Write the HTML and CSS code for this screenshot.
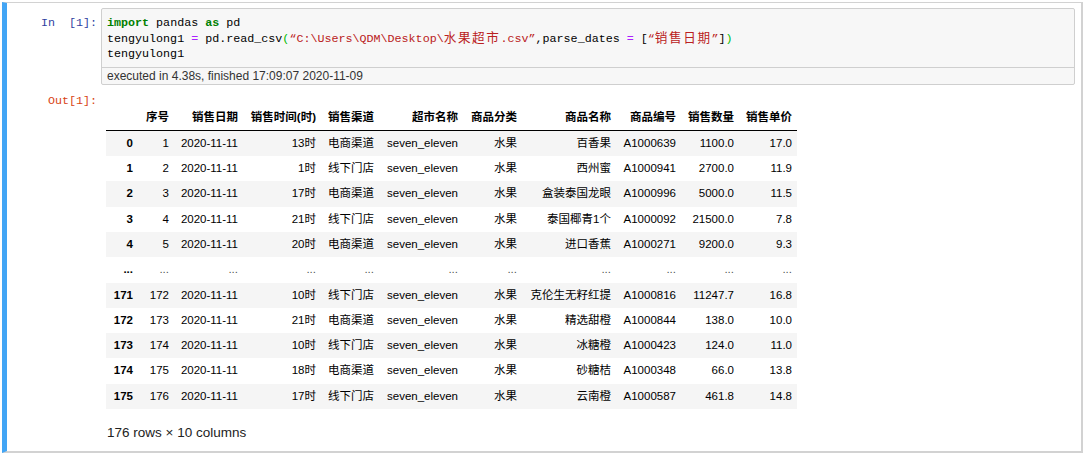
FILE: index.html
```html
<!DOCTYPE html>
<html lang="zh">
<head>
<meta charset="utf-8">
<title>Notebook</title>
<link rel="stylesheet" href="styles.css">
</head>
<body>
<div class="cell">
  <div class="input">
    <div class="prompt in-prompt">In  [1]:</div>
    <div class="code-box">
      <div class="code">
        <div class="line"><span class="kw">import</span> pandas <span class="kw">as</span> pd</div>
        <div class="line">tengyulong1 <span class="op">=</span> pd.read_csv<span class="br">(</span><span class="str">“C:\Users\QDM\Desktop\<span class="cjk">水果超市</span>.csv”</span>,parse_dates <span class="op">=</span> [<span class="str">“<span class="cjk">销售日期</span>”</span>]<span class="br">)</span></div>
        <div class="line">tengyulong1</div>
      </div>
      <div class="exec">executed in 4.38s, finished 17:09:07 2020-11-09</div>
    </div>
  </div>
  <div class="output">
    <div class="prompt out-prompt">Out[1]:</div>
    <div class="out-content">
      <table class="df">
        <colgroup>
          <col class="c0"><col class="c1"><col class="c2"><col class="c3"><col class="c4"><col class="c5"><col class="c6"><col class="c7"><col class="c8"><col class="c9"><col class="c10">
        </colgroup>
        <thead>
          <tr><th></th><th>序号</th><th>销售日期</th><th>销售时间(时)</th><th>销售渠道</th><th>超市名称</th><th>商品分类</th><th>商品名称</th><th>商品编号</th><th>销售数量</th><th>销售单价</th></tr>
        </thead>
        <tbody>
          <tr><th>0</th><td>1</td><td>2020-11-11</td><td>13时</td><td>电商渠道</td><td>seven_eleven</td><td>水果</td><td>百香果</td><td>A1000639</td><td>1100.0</td><td>17.0</td></tr>
          <tr><th>1</th><td>2</td><td>2020-11-11</td><td>1时</td><td>线下门店</td><td>seven_eleven</td><td>水果</td><td>西州蜜</td><td>A1000941</td><td>2700.0</td><td>11.9</td></tr>
          <tr><th>2</th><td>3</td><td>2020-11-11</td><td>17时</td><td>电商渠道</td><td>seven_eleven</td><td>水果</td><td>盒装泰国龙眼</td><td>A1000996</td><td>5000.0</td><td>11.5</td></tr>
          <tr><th>3</th><td>4</td><td>2020-11-11</td><td>21时</td><td>线下门店</td><td>seven_eleven</td><td>水果</td><td>泰国椰青1个</td><td>A1000092</td><td>21500.0</td><td>7.8</td></tr>
          <tr><th>4</th><td>5</td><td>2020-11-11</td><td>20时</td><td>电商渠道</td><td>seven_eleven</td><td>水果</td><td>进口香蕉</td><td>A1000271</td><td>9200.0</td><td>9.3</td></tr>
          <tr class="ellipsis"><th>...</th><td>...</td><td>...</td><td>...</td><td>...</td><td>...</td><td>...</td><td>...</td><td>...</td><td>...</td><td>...</td></tr>
          <tr><th>171</th><td>172</td><td>2020-11-11</td><td>10时</td><td>线下门店</td><td>seven_eleven</td><td>水果</td><td>克伦生无籽红提</td><td>A1000816</td><td>11247.7</td><td>16.8</td></tr>
          <tr><th>172</th><td>173</td><td>2020-11-11</td><td>21时</td><td>电商渠道</td><td>seven_eleven</td><td>水果</td><td>精选甜橙</td><td>A1000844</td><td>138.0</td><td>10.0</td></tr>
          <tr><th>173</th><td>174</td><td>2020-11-11</td><td>10时</td><td>线下门店</td><td>seven_eleven</td><td>水果</td><td>冰糖橙</td><td>A1000423</td><td>124.0</td><td>11.0</td></tr>
          <tr><th>174</th><td>175</td><td>2020-11-11</td><td>18时</td><td>电商渠道</td><td>seven_eleven</td><td>水果</td><td>砂糖桔</td><td>A1000348</td><td>66.0</td><td>13.8</td></tr>
          <tr><th>175</th><td>176</td><td>2020-11-11</td><td>17时</td><td>线下门店</td><td>seven_eleven</td><td>水果</td><td>云南橙</td><td>A1000587</td><td>461.8</td><td>14.8</td></tr>
        </tbody>
      </table>
      <p class="shape">176 rows × 10 columns</p>
    </div>
  </div>
</div>
</body>
</html>
```

FILE: styles.css
```css
html, body {
  margin: 0;
  padding: 0;
  background: #ffffff;
}

.cell {
  margin: 2px 2px 0 2px;
  height: 451px;
  box-sizing: border-box;
  border-top: 1px solid #d2d2d2;
  border-right: 2px solid #d2d2d2;
  border-bottom: 2px solid #d2d2d2;
  border-left: 5px solid #42a5f5;
  padding: 5px 6px 0 0;
}

.input,
.output {
  display: flex;
  align-items: flex-start;
}

.prompt {
  flex: none;
  width: 94px;
  box-sizing: border-box;
  padding-right: 4px;
  text-align: right;
  white-space: pre;
  font-family: "Liberation Mono", "DejaVu Sans Mono", monospace;
  font-size: 11.7px;
  line-height: 15.5px;
}

.in-prompt {
  color: #303f9f;
  padding-top: 8px;
}

.out-prompt {
  color: #d84315;
}

.code-box {
  flex: 1;
  border: 1px solid #cfcfcf;
  border-radius: 2px;
  background: #f7f7f7;
}

.code {
  padding: 7px 6px 4px 5px;
  font-family: "Liberation Mono", "Noto Sans CJK SC", monospace;
  font-size: 11.7px;
  color: #000;
}

.code .line {
  height: 15.5px;
  line-height: 15.5px;
  white-space: pre;
}

.code .cjk {
  font-family: "Noto Sans CJK SC", sans-serif;
  font-size: 12.6px;
  line-height: 10px;
  letter-spacing: 1.6px;
}

.kw {
  color: #008000;
  font-weight: bold;
}

.op {
  color: #aa22ff;
}

.str {
  color: #ba2121;
}

.br {
  color: #00bb00;
}

.exec {
  border-top: 1px solid #cfcfcf;
  padding: 0 6px 0 5px;
  height: 16px;
  font-family: "Liberation Sans", Arial, sans-serif;
  font-size: 12px;
  line-height: 16px;
  color: #333;
}

.output {
  margin-top: 9px;
}

.out-content {
  flex: 1;
  padding: 11px 0 0 5px;
}

.df {
  border-collapse: collapse;
  border-spacing: 0;
  table-layout: fixed;
  width: 691px;
  font-family: "Liberation Sans", Arial, "Noto Sans CJK SC", sans-serif;
  font-size: 11.5px;
  color: #000;
}

.df .c0 { width: 32px; }
.df .c1 { width: 36px; }
.df .c2 { width: 69px; }
.df .c3 { width: 78px; }
.df .c4 { width: 58px; }
.df .c5 { width: 84px; }
.df .c6 { width: 59px; }
.df .c7 { width: 94px; }
.df .c8 { width: 65px; }
.df .c9 { width: 58px; }
.df .c10 { width: 58px; }

.df th,
.df td {
  padding: 6px 5px 6px 2px;
  line-height: 13.3px;
  text-align: right;
  vertical-align: middle;
  white-space: nowrap;
  border: none;
}

.df th {
  font-weight: bold;
}

.df thead tr {
  border-bottom: 1px solid #000;
}

.df tbody tr:nth-child(odd) {
  background: #f5f5f5;
}

.df .ellipsis td {
  color: #555;
}

.shape {
  margin: 16px 0 0 1px;
  font-family: "Liberation Sans", Arial, sans-serif;
  font-size: 13.5px;
  line-height: 16px;
  color: #222;
}
```
